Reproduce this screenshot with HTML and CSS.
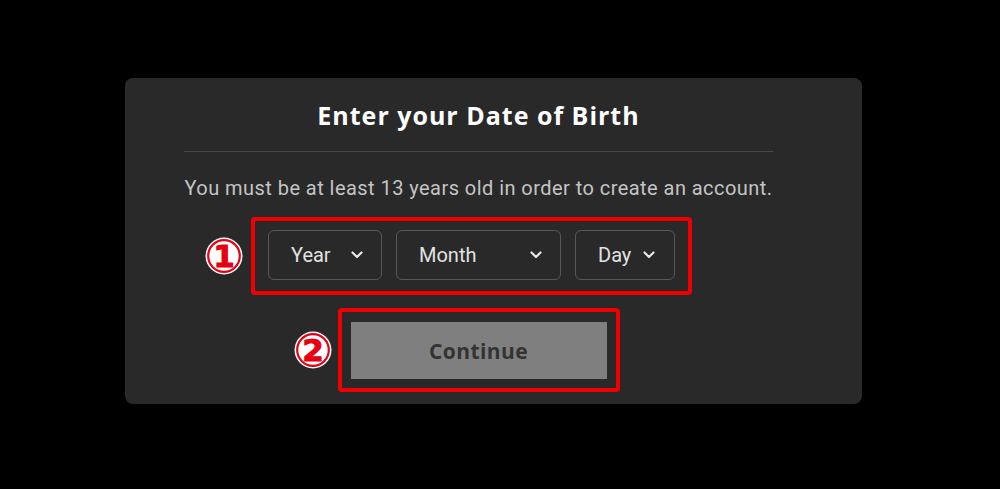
FILE: index.html
```html
<!DOCTYPE html>
<html>
  <head>
    <meta charset="utf-8" />
    <title>Enter your Date of Birth</title>
    <link rel="stylesheet" href="styles.css">
  </head>

  <body>
    <div class="page">
      <div class="dob-card">
        <h1 class="dob-title">Enter your Date of Birth</h1>
        <div class="dob-divider"></div>
        <p class="dob-text">You must be at least 13 years old in order to create an account.</p>

        <div class="mark-box mark-box-dates">
          <span class="marker">
            <svg width="38" height="38" viewBox="0 0 38 38">
              <circle cx="19" cy="19" r="18.5" fill="#ffffff" />
              <circle cx="19" cy="19" r="15.8" fill="none" stroke="#e60012" stroke-width="2.2" />
              <text x="19" y="30" text-anchor="middle" class="marker-num">1</text>
            </svg>
          </span>
          <div class="date-row">
            <div class="date-select date-year">
              <span>Year</span>
              <svg width="12" height="8" viewBox="0 0 12 8"><path d="M1.5 1.5 L6 6 L10.5 1.5" fill="none" stroke="#e6e6e6" stroke-width="2.2" stroke-linecap="round" stroke-linejoin="round" /></svg>
            </div>
            <div class="date-select date-month">
              <span>Month</span>
              <svg width="12" height="8" viewBox="0 0 12 8"><path d="M1.5 1.5 L6 6 L10.5 1.5" fill="none" stroke="#e6e6e6" stroke-width="2.2" stroke-linecap="round" stroke-linejoin="round" /></svg>
            </div>
            <div class="date-select date-day">
              <span>Day</span>
              <svg width="12" height="8" viewBox="0 0 12 8"><path d="M1.5 1.5 L6 6 L10.5 1.5" fill="none" stroke="#e6e6e6" stroke-width="2.2" stroke-linecap="round" stroke-linejoin="round" /></svg>
            </div>
          </div>
        </div>

        <div class="mark-box mark-box-continue">
          <span class="marker">
            <svg width="38" height="38" viewBox="0 0 38 38">
              <circle cx="19" cy="19" r="18.5" fill="#ffffff" />
              <circle cx="19" cy="19" r="15.8" fill="none" stroke="#e60012" stroke-width="2.2" />
              <text x="19" y="30" text-anchor="middle" class="marker-num">2</text>
            </svg>
          </span>
          <button class="continue-btn" type="button">Continue</button>
        </div>
      </div>
    </div>
  </body>
</html>
```

FILE: styles.css
```css
html,
body {
  margin: 0;
  background-color: #000000;
}

.page {
  height: 489px;
  padding-top: 78px;
  box-sizing: border-box;
}

.dob-card {
  width: 737px;
  height: 326px;
  margin-left: 125px;
  padding: 22px 89px 0 59px;
  box-sizing: border-box;
  background-color: #292929;
  border-radius: 8px;
  display: flex;
  flex-direction: column;
  align-items: center;
}

.dob-title {
  margin: 0;
  font-family: "Open Sans", Inter, sans-serif;
  font-size: 25px;
  line-height: 30px;
  font-weight: 700;
  letter-spacing: 1px;
  color: #ffffff;
}

.dob-divider {
  width: 100%;
  height: 1px;
  margin-top: 21px;
  background-color: #4a4a4a;
}

.dob-text {
  margin: 24px 0 0 0;
  font-family: Roboto, "Noto Sans", sans-serif;
  font-size: 20px;
  line-height: 24px;
  letter-spacing: 0.45px;
  color: #c4c4c4;
  white-space: nowrap;
}

.mark-box {
  position: relative;
  border: 4px solid #f00000;
  border-radius: 4px;
}

.mark-box-dates {
  margin: 17px 14px 0 0;
  padding: 9px 13px 11px 13px;
}

.mark-box-continue {
  margin-top: 13px;
  padding: 10px 9px 9px 9px;
}

.marker {
  position: absolute;
  top: 50%;
  width: 38px;
  height: 38px;
  transform: translateY(-50%);
}

.mark-box-dates .marker {
  left: -50px;
}

.mark-box-continue .marker {
  left: -48px;
}

.marker svg {
  display: block;
}

.marker-num {
  font-family: "DejaVu Sans", sans-serif;
  font-size: 31px;
  font-weight: 700;
  fill: #e60012;
  stroke: #e60012;
  stroke-width: 0.9;
}

.date-row {
  display: flex;
  gap: 14px;
}

.date-select {
  height: 50px;
  padding: 0 18px 0 22px;
  box-sizing: border-box;
  border: 1px solid #585858;
  border-radius: 6px;
  display: flex;
  align-items: center;
  justify-content: space-between;
  font-family: Roboto, "Noto Sans", sans-serif;
  font-size: 20px;
  color: #e2e2e2;
}

.date-year {
  width: 114px;
}

.date-month {
  width: 165px;
}

.date-day {
  width: 100px;
  padding-right: 19px;
}

.continue-btn {
  display: block;
  width: 256px;
  height: 57px;
  border: 0;
  background-color: #7f7f7f;
  font-family: "Open Sans", Inter, sans-serif;
  font-size: 21px;
  font-weight: 700;
  letter-spacing: 0.4px;
  color: #333333;
  cursor: pointer;
}
```
